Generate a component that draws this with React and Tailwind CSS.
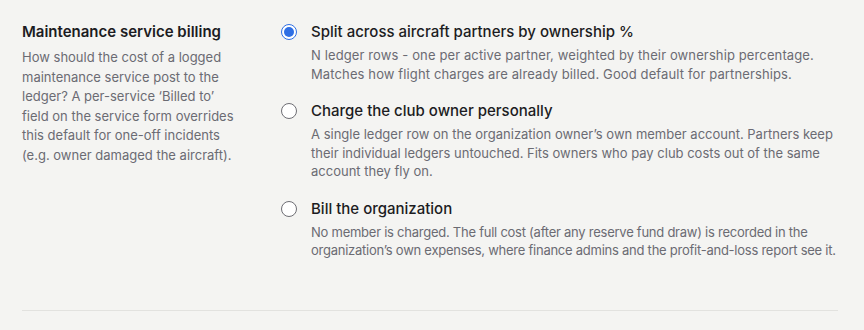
import { useState } from "react";

// help copy is kept in the same lines the settings page shows
const options = [
  {
    id: "partners",
    label: "Split across aircraft partners by ownership %",
    help: [
      "N ledger rows - one per active partner, weighted by their ownership percentage.",
      "Matches how flight charges are already billed. Good default for partnerships.",
    ],
    tracking: "tracking-[0.12px]",
  },
  {
    id: "owner",
    label: "Charge the club owner personally",
    help: [
      "A single ledger row on the organization owner\u2019s own member account. Partners keep",
      "their individual ledgers untouched. Fits owners who pay club costs out of the same",
      "account they fly on.",
    ],
    tracking: "tracking-normal",
  },
  {
    id: "org",
    label: "Bill the organization",
    help: [
      "No member is charged. The full cost (after any reserve fund draw) is recorded in the",
      "organization\u2019s own expenses, where finance admins and the profit-and-loss report see it.",
    ],
    tracking: "tracking-[-0.25px]",
  },
];

const sectionHelp =
  "How should the cost of a logged maintenance service post to the ledger? A per-service \u2018Billed to\u2019 field on the service form overrides this default for one-off incidents (e.g. owner damaged the aircraft).";

const App = () => {
  const [billing, setBilling] = useState("partners");

  return (
    <div className="min-h-[330px] bg-[#f4f4f2] font-['Inter',sans-serif] text-[#1c1c22]">
      <div className="mx-[22px] w-[816px] border-b border-[#e2e2df] pt-[22px] pb-[50px]">
        <div className="grid grid-cols-[259px_1fr]">
          {/* Left: section heading */}
          <div>
            <h3 className="text-[15px] font-semibold leading-[20px]">Maintenance service billing</h3>
            <p className="mt-[6px] max-w-[222px] text-[13px] leading-[19.6px] text-[#6b6b73]">{sectionHelp}</p>
          </div>

          {/* Right: radio options */}
          <div className="flex flex-col gap-[18px]">
            {options.map((opt) => {
              const checked = billing === opt.id;
              return (
                <label key={opt.id} className="flex cursor-pointer items-start gap-[14px]" onClick={() => setBilling(opt.id)}>
                  <span
                    className={
                      checked
                        ? "mt-[2px] flex h-4 w-4 shrink-0 items-center justify-center rounded-full border border-[#2f6fe4] bg-white"
                        : "mt-[2px] flex h-4 w-4 shrink-0 items-center justify-center rounded-full border border-[#6e6e74] bg-white"
                    }
                  >
                    {checked && <span className="h-[10px] w-[10px] rounded-full bg-[#2f6fe4]" />}
                  </span>
                  <span className="flex min-w-0 flex-col">
                    <span className="text-[15px] font-medium leading-[20px]">{opt.label}</span>
                    <span className={`mt-[4px] whitespace-nowrap text-[13px] leading-[18.5px] text-[#6b6b73] ${opt.tracking}`}>
                      {opt.help.map((line) => (
                        <span key={line} className="block">
                          {line}
                        </span>
                      ))}
                    </span>
                  </span>
                </label>
              );
            })}
          </div>
        </div>
      </div>
    </div>
  );
};

export default App;
